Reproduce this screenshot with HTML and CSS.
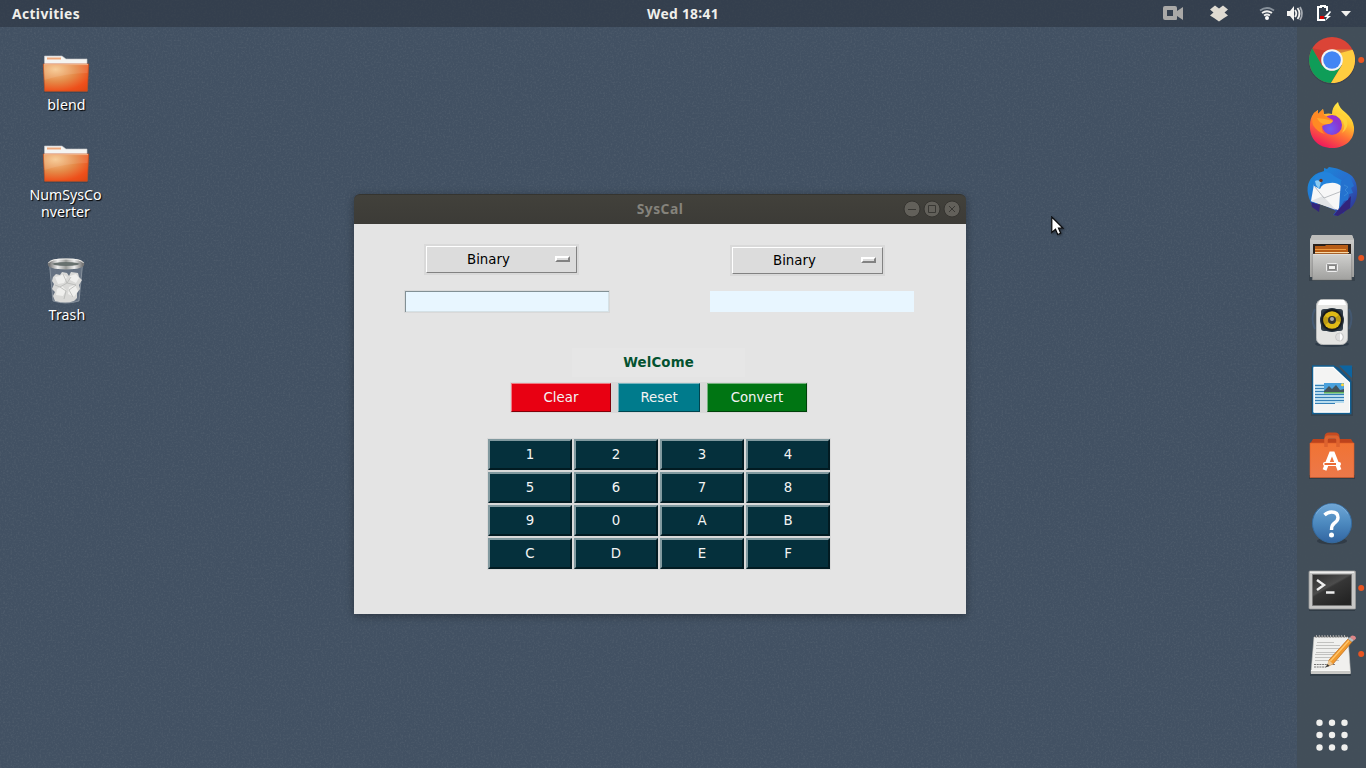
FILE: index.html
```html
<!DOCTYPE html>
<html lang="en">
<head>
<meta charset="utf-8">
<title>SysCal</title>
<link rel="stylesheet" href="styles.css">
</head>
<body>
<div class="screen">
  <svg class="grain" width="1366" height="768" aria-hidden="true">
    <filter id="noise" x="0" y="0" width="100%" height="100%"><feTurbulence type="fractalNoise" baseFrequency=".55" numOctaves="2" seed="4"/><feColorMatrix values="0 0 0 0 .7  0 0 0 0 .7  0 0 0 0 .65  1.1 0 0 0 -.5"/></filter>
    <rect width="1366" height="768" filter="url(#noise)"/>
  </svg>
  <header class="topbar">
    <span class="activities">Activities</span>
    <span class="clock">Wed 18<span class="colon">:</span>41</span>
    <svg class="status" width="220" height="27" viewBox="0 0 220 27">
      <path fill="#aaa9a7" fill-rule="evenodd" d="M19 6h10a2 2 0 0 1 2 2v3l6-4v13l-6-4v3a1 1 0 0 1-1 1H19a2 2 0 0 1-2-2V8a2 2 0 0 1 2-2zm2 4v6h6v-6z"/>
      <path fill="#dfdbd2" d="M69 5.500l4 3 4-3 5 4-3.500 3 3.500 3-4 2.500-5 3.500-5-3.500-4-2.500 3.500-3-3.500-3z"/>
      <g fill="none" stroke="#f2f1ef" stroke-width="1.800">
        <path stroke="#87909a" d="M114 10.500q7-5 14 0"/><path d="M116 13q5-3.500 10 0"/><path d="M118 15.500q3-2 6 0"/>
        <path d="M149 10q2.500 3.500 0 7M151.500 8q4 5.500 0 11"/><path stroke="#a5abb2" d="M154 7q4 6.500 0 13"/>
      </g>
      <circle cx="121" cy="18" r="2" fill="#fff"/>
      <path fill="#f5f4f2" d="M141 11h3l4-5v15l-4-5h-3z"/>
      <path fill="none" stroke="#fff" stroke-width="2" d="M181 11V7h-2V6h-4v1h-3v13h7"/>
      <path fill="#d90000" d="M174 16h4v3h-4z"/>
      <path fill="#fff" d="M184 11l-6 6h3l-2 4 6-5h-3l3-4z"/>
      <path fill="#f2f1ef" d="M195 11h10l-5 5.500z"/>
    </svg>
  </header>

  <main class="workspace">
    <section class="desktop-icons">
      <div class="shortcut folder-one">
        <svg width="50" height="42" viewBox="0 0 50 42">
          <defs>
            <radialGradient id="orange" cx=".27" cy=".2" r="1"><stop offset="0" stop-color="#f6c88f"/><stop offset=".45" stop-color="#e58a48"/><stop offset=".8" stop-color="#ee501b"/><stop offset="1" stop-color="#df4814"/></radialGradient>
            <g id="folder"><path fill="#354253" opacity=".6" d="M3 37h44v2H3z"/><path fill="#f4f4f2" stroke="#c4c5c4" stroke-width=".6" d="M3.500 2H21l4 3h21v12H3.500z"/><path fill="#f0aa7d" d="M6 3.500h14v2H6z"/><path fill="url(#orange)" stroke="#c6501f" stroke-width=".7" d="M2.300 10h45.400l-1.400 27.300H3.700z"/><path fill="#fff" opacity=".1" d="M3 11h44l-.5 8Q26 19 3.500 26z"/><path stroke="#f2b68a" d="M3 10.600h44"/></g>
          </defs>
          <use href="#folder"/>
        </svg>
        <span>blend</span>
      </div>
      <div class="shortcut folder-two">
        <svg width="50" height="42" viewBox="0 0 50 42"><use href="#folder"/></svg>
        <span>NumSysCo<br>nverter</span>
      </div>
      <div class="shortcut trash">
        <svg width="42" height="50" viewBox="0 0 42 50">
          <defs><linearGradient id="rim"><stop stop-color="#777"/><stop offset=".25" stop-color="#eee"/><stop offset=".5" stop-color="#999b98"/><stop offset=".75" stop-color="#eee"/><stop offset="1" stop-color="#777"/></linearGradient></defs>
          <path fill="#8792a0" fill-opacity=".5" stroke="#a4adb6" stroke-width=".6" d="M4.500 9h33l-3.500 36q-13 4-26 0z"/>
          <path fill="#d9d9d7" d="M8 21l3-3 4 1 2-3 5 1 2 3 2-4 7 1 1 4 3 3-3 5 1 4-3 4v5l-3 3q-8 3-19 0l-2-5 2-4-3-3 2-5-2-3z"/>
          <path fill="#efefed" d="M10 21l5-1 3-2 4 3-3 6-6 1zM25 20l6-2 3 4-3 5-6-3zM12 33l5-3 4 4-3 6-7-1zM24 31l6-2 3 6-4 6-6-3z"/>
          <path fill="none" stroke="#b6b7b5" stroke-width=".8" d="M18 18l4 9-7 4 6 4-2 8M26 21l-4 6 9 2-7 5 4 7M10 29l5 2"/>
          <ellipse cx="21" cy="8" rx="16.500" ry="3.700" fill="#68716f" stroke="url(#rim)" stroke-width="3.500"/>
          <path fill="none" stroke="#f1f1ef" stroke-width="1" d="M3.500 7Q5 3 21 3t17.500 4"/>
        </svg>
        <span>Trash</span>
      </div>
    </section>

    <section class="window">
      <div class="titlebar">
        <span class="title">SysCal</span>
        <svg class="controls" width="60" height="20" viewBox="0 0 60 20"><g fill="#62605a" stroke="#353430" stroke-width="1"><circle cx="10" cy="10" r="8"/><circle cx="30" cy="10" r="8"/><circle cx="50" cy="10" r="8"/></g><path fill="none" stroke="#393834" d="M6 10.500h8M26.500 6.500h7v7h-7zM47 7l6 6M53 7l-6 6"/></svg>
      </div>
      <div class="client">
        <div class="side left">
          <div class="ring"><button class="option"><span>Binary</span><i></i></button></div>
          <input class="field" type="text">
        </div>
        <div class="side right">
          <div class="ring"><button class="option"><span>Binary</span><i></i></button></div>
          <input class="field flat" type="text">
        </div>
        <div class="message">WelCome</div>
        <div class="actions">
          <button class="act red">Clear</button><button class="act teal">Reset</button><button class="act green">Convert</button>
        </div>
        <div class="keypad">
          <button>1</button><button>2</button><button>3</button><button>4</button>
          <button>5</button><button>6</button><button>7</button><button>8</button>
          <button>9</button><button>0</button><button>A</button><button>B</button>
          <button>C</button><button>D</button><button>E</button><button>F</button>
        </div>
      </div>
    </section>

    <nav class="dock">
      <svg viewBox="1 0 69 66">
        <circle cx="36" cy="34" r="23.500" fill="#303b47" opacity=".5"/>
        <circle cx="36" cy="33" r="23" fill="#db4437"/>
        <path fill="#0f9d58" d="M16.300 21.200A23 23 0 0 0 35 56l11-18-10 6-10-5.500z"/>
        <path fill="#ffcd40" d="M36 22.700h20.600A23 23 0 0 1 35 56l11-18z"/>
        <path fill="#b6372c" opacity=".5" d="M16.300 21.200L26 38v-8l5-6zM36 22.700h20.600l-15 4z"/>
        <circle cx="36" cy="33" r="10.800" fill="#f4f5f5"/><circle cx="36" cy="33" r="8.800" fill="#4285f4"/>
        <circle cx="65.200" cy="33" r="3" fill="#e95420"/>
      </svg>
      <svg viewBox="1 0 69 66">
        <defs><linearGradient id="fire" x1=".8" y1="0" x2=".3" y2="1"><stop stop-color="#fff34f"/><stop offset=".35" stop-color="#ffc42d"/><stop offset=".62" stop-color="#ff7135"/><stop offset="1" stop-color="#ef155d"/></linearGradient><radialGradient id="globe" cx=".4" cy=".7"><stop stop-color="#6d5cf5"/><stop offset="1" stop-color="#8c35cf"/></radialGradient></defs>
        <path fill="url(#fire)" d="M18 20l4-3v4l5-5 1 5q5-1 8 0 0-7 6-12 1 6 8 11 7 6 8 14C59 47 49 55 36 55S13 46 14 32q0-7 4-12z"/>
        <circle cx="36" cy="32" r="10" fill="url(#globe)"/>
        <path fill="#9b2fd0" d="M28 25q8-5 15 1l-8 3z"/>
        <path fill="#ff8a24" d="M18 20l4-3v4l5-5 1 6 5 3 4 2q-1 4-6 4l-5 2q-1 5 3 8-8-2-12-9-2-6 1-12z"/>
        <path fill="#ffab2c" d="M21 25l8 1 8 2q-3 4-8 3-5 0-8-6z"/>
        <path fill="#ffd33c" opacity=".85" d="M39 20q2 4 6 6 6 6 1 14 7-5 5-13-3-4-7-5z"/>
      </svg>
      <svg viewBox="1 0 69 66">
        <defs><linearGradient id="bird" x1="0" y1="0" x2="1" y2="1"><stop stop-color="#168fdc"/><stop offset=".55" stop-color="#2a6bcd"/><stop offset="1" stop-color="#302783"/></linearGradient></defs>
        <path fill="#1d50b2" d="M13 33q0-13 10-20l4 3-8 14 1 18-5-3z"/>
        <path fill="url(#bird)" d="M20 15l8-3V9l3 1 2-2q9 1 14 4 10 3 13 12 4 16-6 26l-3-1-4 6-2-3-4 5-4-1 3-4-19-9 2 9-7-6-3-7Q8 23 20 15z"/>
        <path fill="#32247b" d="M15 43l9 3-1 7-7-5zM42 51l13-14-1 12-12 8-4-1z"/>
        <path fill="#f7f7f7" d="M18 25l5-1 19-1 5 4-1 15-4 9L15 42z"/>
        <path fill="#e1e3e5" d="M15 42l12-5 2 2 11 12z"/><path fill="#f7f7f7" d="M18 25l11 14 17-7V25l-8-2z"/>
        <path fill="none" stroke="#a9adb3" stroke-width=".8" d="M19 28l9 11 18-7"/>
        <path fill="#2383dc" d="M18 27q-2-8 5-13 10-3 15 3l9 5-1 6q-5-5-12-4-8 0-10 6z"/><path fill="#8bcbf2" d="M19 22q3-2 6 1l-2 7-3-4z"/>
        <circle cx="25" cy="21.500" r="1.700" fill="#6d3823"/>
        <path fill="#2472cf" d="M45 22l8-7 5 12-3 2 2 5-4 1-1 6-4 1-5 8 1-15z"/><path fill="none" stroke="#3788d8" stroke-width="1" d="M48 26l4 2-3 3 3 3-4 3"/>
      </svg>
      <svg viewBox="1 0 69 66">
        <defs><linearGradient id="metal" x2="0" y2="1"><stop stop-color="#d0d0ce"/><stop offset="1" stop-color="#a0a09e"/></linearGradient></defs>
        <path fill="#2e3843" opacity=".6" d="M13 50h46v6H13z"/>
        <path fill="url(#metal)" d="M16 10h40l2 5v37H14V15z"/><path fill="#bcbcba" d="M16 10h40l2 5H14z"/>
        <path fill="#2a211c" d="M17 19h38v11H17z"/><path fill="#b75d16" d="M19 21h10l1-1h22v9H19z"/><path stroke="#ee9b40" d="M19 24.500h31"/><path stroke="#f8d6a2" d="M19 27.500h34"/>
        <path fill="url(#metal)" stroke="#777" stroke-width=".5" d="M16.300 29h39.400v26H16.300z"/><path stroke="#ddd" d="M17 29.500h38"/>
        <rect x="30.500" y="38.500" width="11" height="8" rx="1" fill="#999" stroke="#eee"/><path fill="#f1f1ef" stroke="#666" stroke-width=".7" d="M32.500 40.500h7v4h-7z"/>
        <circle cx="65.200" cy="33" r="3" fill="#e95420"/>
      </svg>
      <svg viewBox="1 0 69 66">
        <ellipse cx="36" cy="53" rx="17" ry="3" fill="#273341" opacity=".7"/>
        <path fill="none" stroke="#486c9e" stroke-width="2" opacity=".35" d="M19 18q-5 9 0 20M53 18q5 9 0 20"/>
        <rect x="20.500" y="8.500" width="31" height="45" rx="6" fill="#e4e4e2" stroke="#b6b8b8"/>
        <path fill="#fff" d="M24 9h24l2 5H22z"/>
        <rect x="25" y="18" width="22" height="22" rx="3" fill="#343f49"/>
        <circle cx="36" cy="29" r="12" fill="#26323e"/><circle cx="36" cy="29" r="10.700" fill="#191a1c"/><circle cx="36" cy="29" r="8.800" fill="#e0ba16"/><path fill="#927611" opacity=".45" d="M36 29l-7-4a8 8 0 0 0 0 9zM36 29l7-5a8 8 0 0 1 1 7z"/><circle cx="36" cy="29" r="4" fill="#333"/><circle cx="36" cy="28" r="2" fill="#aaa"/>
        <circle cx="40" cy="46" r="0" fill="none"/><circle cx="40.500" cy="46" r="0" fill="none"/>
        <circle cx="43.500" cy="46" r="4" fill="#ddd" stroke="#bbb" stroke-width=".6"/><path fill="#fff" d="M44 42q5 4 0 8z"/>
      </svg>
      <svg viewBox="1 0 69 66">
        <path fill="#2d3945" opacity=".5" d="M15 10h42v49H15z"/>
        <path fill="#f4f4f3" stroke="#125f91" stroke-width="1.500" d="M16.700 9h21l17 16v31.500h-38z"/><path fill="none" stroke="#fff" d="M18 10.500h19L53.500 26v29H18z"/>
        <path fill="#42505c" d="M38.500 8h18v16.500h-2z"/>
        <path fill="#0d64a0" d="M43 8.500h13V21z"/><path fill="#115687" d="M38 9q5 1 7 4l7 7q3 2 4 5l-2-.5z"/>
        <path fill="#b8dcee" d="M19 27h29v19H39v1H19z"/><path stroke="#3680b7" stroke-width="1" d="M19 28.500h9M19 31.500h9M19 34.500h9M19 37.500h29M19 40.500h29M19 43.500h29M19 46.500h20"/>
        <path fill="#4aa1dc" d="M28 26h20v10H28z"/><path fill="#44545c" d="M28 34l5-5 3 3 4-4 4 5 4-1v4H28z"/><path fill="#62b25c" d="M28 35h20v1.500H28z"/><circle cx="46.500" cy="27.800" r="1.500" fill="#ffd83d"/>
      </svg>
      <svg viewBox="1 0 69 66">
        <defs><linearGradient id="bag" x2="0" y2="1"><stop stop-color="#f17333"/><stop offset="1" stop-color="#ec784a"/></linearGradient></defs>
        <path fill="#2d3741" opacity=".7" d="M13 52h46v4H13z"/><path fill="#bd431c" d="M17 16h38l3 5H14z"/><path fill="none" stroke="#c44b21" stroke-width="3" d="M30 19v-5q0-3 3-3h6q3 0 3 3v5"/><path fill="url(#bag)" stroke="#db5c29" stroke-width=".6" d="M14 20h44v34.500H14z"/>
        <path fill="none" stroke="#dd622e" stroke-width="3.500" d="M30 24v-7q0-3 3-3h6q3 0 3 3v7"/>
        <path fill="none" stroke="#fff" stroke-width="4" d="M28.500 47L35 30.500h2L43.500 47"/><rect x="27" y="39" width="18" height="4" rx="2" fill="#fff"/><path stroke="#e95c20" stroke-width="1.800" d="M28.500 41H40"/>
      </svg>
      <svg viewBox="1 0 69 66">
        <defs><linearGradient id="help" x2="0" y2="1"><stop stop-color="#70a7d6"/><stop offset=".5" stop-color="#4c89bf"/><stop offset="1" stop-color="#3265a1"/></linearGradient></defs>
        <ellipse cx="36" cy="52" rx="15" ry="3.500" fill="#26313c" opacity=".6"/><circle cx="36" cy="34.200" r="19.600" fill="url(#help)" stroke="#356b9f"/><path fill="none" stroke="#8dbbe1" opacity=".5" d="M20 25q6-10 16-10t16 10"/>
        <path fill="none" stroke="#fff" stroke-width="3.400" d="M28.500 26q3-3 7-3 6.500 0 6.500 5.500 0 3-3.500 5.500-3 2-3 7"/><circle cx="35.500" cy="46" r="2.500" fill="#fff"/>
      </svg>
      <svg viewBox="1 0 69 66">
        <defs><linearGradient id="term" x2=".7" y2="1"><stop stop-color="#2d2d2d"/><stop offset=".45" stop-color="#4c4c4c"/><stop offset=".5" stop-color="#363636"/><stop offset="1" stop-color="#242424"/></linearGradient></defs>
        <path fill="#27313b" opacity=".6" d="M13 52h46v4H13z"/><rect x="13" y="16" width="46.500" height="38" rx="1" fill="#c6c6c5" stroke="#999" stroke-width=".8"/><path fill="#eee" d="M14 16.500h44v1.500H14z"/><path fill="url(#term)" stroke="#777" d="M16.500 19.500h39v31h-39z"/>
        <path fill="none" stroke="#eee" stroke-width="2.400" d="M21 25l7 5-7 5M30 37.500h8.500"/><circle cx="65.200" cy="33" r="3" fill="#e95420"/>
      </svg>
      <svg viewBox="1 0 69 66">
        <path fill="#28333e" opacity=".6" d="M14 51h41v4H14z"/><path fill="#f0f0ee" stroke="#c6c6c3" stroke-width=".6" d="M18 16h34l2.500 36.500H15z"/><path fill="#c9c9c6" d="M15 49h39v4H15z"/><path stroke="#f8f8f6" d="M15 49.500h39"/>
        <path stroke="#555" stroke-width="1.500" stroke-dasharray="1.500 1.300" d="M19 15.500h32"/><path stroke="#aaa" stroke-width="3" stroke-dasharray="1 1.800" d="M20 15.500h30"/>
        <path stroke="#bcbcba" stroke-width=".9" d="M21 21.500h17M20 24.500h24M20 27.500h26M20 31.500h24M19 33.500h26M19 36.500h23M19 39.500h24"/><path stroke="#777" stroke-width="1.200" stroke-dasharray="2 .7" d="M18 43.500h21M18 46h12"/>
        <path fill="#f19a2e" stroke="#be6818" stroke-width=".7" d="M33 39l19-21 4 3-19 22-5 2z"/><path stroke="#ffc66c" stroke-width="1.300" d="M34.500 40L53 19.500"/><path fill="#e9c592" d="M33 39l4 4-7 3z"/><path fill="#333" d="M31.500 43l2 2-4 1.500z"/><path fill="#b9bdbf" d="M52 18l2-2 4 3-2 2z"/><path fill="#de8587" d="M54 16l2-1.500q4 0 4 3l-2 2z"/>
        <circle cx="65.200" cy="33" r="3" fill="#e95420"/>
      </svg>
      <svg class="apps" viewBox="1 0 69 66"><g fill="#efefed"><circle cx="23.500" cy="20.700" r="3.200"/><circle cx="36" cy="20.700" r="3.200"/><circle cx="48.500" cy="20.700" r="3.200"/><circle cx="23.500" cy="33" r="3.200"/><circle cx="36" cy="33" r="3.200"/><circle cx="48.500" cy="33" r="3.200"/><circle cx="23.500" cy="45.500" r="3.200"/><circle cx="36" cy="45.500" r="3.200"/><circle cx="48.500" cy="45.500" r="3.200"/></g></svg>
    </nav>
  </main>
  <svg class="pointer" width="14" height="21" viewBox="0 0 14 21"><path fill="#fff" stroke="#08090b" stroke-width="1.200" d="M.8 1v15.500l3.700-3.300 2.200 5.300 3-1.300-2.200-5h4.400z"/></svg>
</div>
</body>
</html>
```

FILE: styles.css
```css
* { box-sizing: border-box; }
body { margin: 0; }
.screen { position: relative; width: 1366px; height: 768px; overflow: hidden; background: #425163; font-family: "Noto Sans", sans-serif; }
.grain { position: absolute; inset: 0; opacity: .16; }
.topbar { position: relative; display: grid; grid-template-columns: 1fr auto 1fr; align-items: center; height: 27px; background: rgba(46, 55, 67, .66); color: #f0efeb; font-weight: 700; font-size: 13.8px; line-height: 27px; }
.activities { padding-left: 12px; letter-spacing: .4px; }
.clock { margin-top: -1px; letter-spacing: .3px; }
.colon { position: relative; top: -1px; }
.status { justify-self: end; display: block; }
.workspace { position: relative; display: grid; grid-template-columns: 354px 612px 331px 69px; height: 741px; }
.desktop-icons { padding: 27px 0 0 16px; width: 116px; }
.shortcut { display: flex; flex-direction: column; align-items: center; width: 100px; color: #fff; font-size: 14.2px; line-height: 17px; text-align: center; text-shadow: 1px 1px 1px #000; }
.shortcut svg { display: block; }
.shortcut span { padding-left: 1px; letter-spacing: .1px; }
.folder-one { height: 90px; }
.folder-two { height: 112px; }
.folder-two span { padding: 0 1px 0 0; letter-spacing: 0; }
.trash svg { margin-left: -1px; }
.trash span { padding-left: 2px; }

.window { margin-top: 167px; width: 612px; height: 420px; border-radius: 6px 6px 0 0; box-shadow: 0 2px 8px rgba(0, 0, 0, .35); }
.titlebar { display: grid; grid-template-columns: 1fr auto 1fr; align-items: center; height: 30px; border-radius: 6px 6px 0 0; border-top: 1px solid #35342f; background: linear-gradient(#42413b, #3c3b37); }
.title { grid-column: 2; margin-top: -2px; color: #85837c; font-weight: 700; font-size: 13.8px; letter-spacing: .5px; line-height: 28px; }
.controls { justify-self: end; margin: -1px 4px 0 0; }
.client { display: grid; grid-template-columns: 306px 306px; grid-template-rows: 124px 29px 36px auto; height: 390px; background: #e4e4e4; font-family: "DejaVu Sans", sans-serif; font-size: 13.33px; }
.side { display: flex; flex-direction: column; align-items: flex-start; }
.left { padding: 20px 0 0 50px; }
.right { padding: 21px 0 0 49px; }
.ring { margin-left: 20px; padding: 2px; width: 155px; height: 31px; background: #d9d9d9; }
.right .ring { margin-left: 21px; }
button { margin: 0; padding: 0; font: inherit; }
.option { display: flex; align-items: center; width: 151px; height: 27px; padding: 0 6px 0 40px; border: 1px solid; border-color: #fff #828282 #828282 #fff; background: #dcdcdc; color: #000; }
.option span { line-height: 25px; margin-top: -1px; }
.option i { width: 15px; height: 6px; margin: -1px 0 0 auto; border: 2px solid; border-color: #fff #828282 #828282 #fff; }
.field { margin: 15px 0 0; padding: 0; width: 206px; height: 23px; outline: 0; border: 1px solid #d9d9d9; border-radius: 0; background: #e8f6ff; box-shadow: inset 1px 1px #829095, inset -1px -1px #d5e1e6; }
.right .field { margin: 15px 0 0 1px; }
.field.flat { width: 204px; height: 21px; border: 0; box-shadow: none; }
.message { grid-column: 1 / 3; margin-left: 218px; padding-top: 1px; width: 173px; background: #e6e6e6; color: #045230; font-weight: 700; letter-spacing: .15px; line-height: 28px; text-align: center; }
.actions { grid-column: 1 / 3; display: flex; gap: 7px; margin: 5px 0 0 156px; padding: 1px; width: 298px; height: 31px; background: #d9d9d9; }
.act { width: 100px; height: 29px; border: 1px solid; color: #f3f3f3; line-height: 26px; }
.red { background: #e80012; border-color: #f07b84 #810009 #810009 #f07b84; }
.teal { width: 82px; background: #007b8c; border-color: #76b5bf #00444e #00444e #76b5bf; }
.green { background: #007513; border-color: #76b47f #00410a #00410a #76b47f; }
.keypad { grid-column: 1 / 3; display: grid; grid-template-columns: repeat(4, 84px); grid-auto-rows: 31px; gap: 2px; margin: 25px 0 0 133px; padding: 1px; width: 344px; height: 132px; background: #d9d9d9; }
.keypad button { border: 2px solid; border-color: #81999f #021b22 #021b22 #81999f; background: #05303c; color: #f4f4f4; line-height: 26px; }

.dock { grid-column: 4; display: flex; flex-direction: column; height: 741px; background: rgba(66, 77, 87, .85); }
.dock svg { display: block; flex: none; width: 69px; height: 66px; }
.dock .apps { margin-top: auto; }
.pointer { position: absolute; left: 1051px; top: 216px; filter: drop-shadow(1px 1px 1px rgba(0, 0, 0, .4)); }
```
